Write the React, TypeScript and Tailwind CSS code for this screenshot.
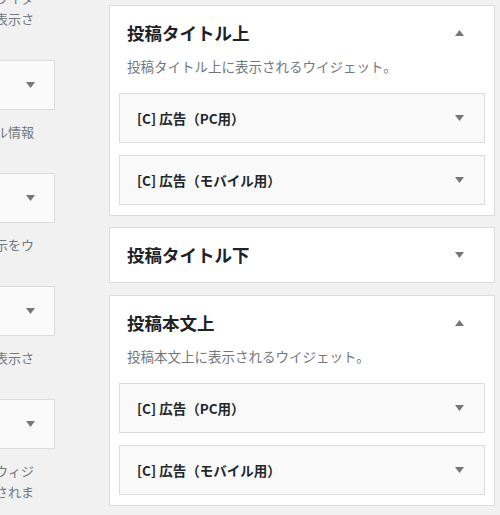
import React from 'react';

const font = { fontFamily: '"Noto Sans CJK JP", "Noto Sans", sans-serif' };

const Arrow = ({ up = false }: { up?: boolean }) => (
  <svg width="9" height="6" viewBox="0 0 9 6" className="shrink-0">
    <polygon points={up ? '0,6 9,6 4.5,0' : '0,0 9,0 4.5,6'} fill="#72777c" />
  </svg>
);

interface LeftWidgetProps {
  lines: string[];
  box?: boolean;
}

const LeftWidget: React.FC<LeftWidgetProps> = ({ lines, box = true }) => (
  <div className="mb-[10px]">
    {box && (
      <div className="h-[50px] border border-[#dcdcde] bg-[#fafafa] flex items-center justify-end pr-[19px] mb-[11px]">
        <Arrow />
      </div>
    )}
    <div className="pr-[21px] text-right text-[13px] leading-[21px] text-[#72777c]">
      {lines.map((l, i) => (
        <div key={i} className="h-[21px] whitespace-nowrap">
          {l}
        </div>
      ))}
    </div>
  </div>
);

const WidgetItem = ({ name }: { name: string }) => (
  <div className="h-[50px] border border-[#dcdcde] bg-[#f9f9f9] flex items-center justify-between pl-[17px] pr-[20px]">
    <span className="text-[13.5px] font-semibold text-[#23282d]">{name}</span>
    <Arrow />
  </div>
);

interface SidebarPanelProps {
  title: string;
  description?: string;
  open?: boolean;
}

const SidebarPanel: React.FC<SidebarPanelProps> = ({ title, description, open = false }) => (
  <div className="border border-[#dcdcde] bg-white">
    <div className="h-[54px] flex items-center justify-between pl-[17px] pr-[30px]">
      <h3 className="text-[17.5px] font-bold text-[#1d2327]">{title}</h3>
      <Arrow up={open} />
    </div>
    {open && (
      <div className="px-[9px] pb-[10px]">
        <p className="-mt-[4px] h-[20px] leading-[20px] pl-[8px] text-[13.5px] text-[#72777c]">
          {description}
        </p>
        <div className="mt-[17px] flex flex-col gap-[12px]">
          <WidgetItem name="[C] 広告（PC用）" />
          <WidgetItem name="[C] 広告（モバイル用）" />
        </div>
      </div>
    )}
  </div>
);

export default function App() {
  return (
    <div className="w-[500px] h-[515px] overflow-hidden bg-[#f1f1f1] flex items-start" style={font}>
      <div className="w-[200px] -ml-[145px] -mt-[13px] shrink-0">
        <LeftWidget box={false} lines={['記事一覧を表示するウイダ', 'サイドバーに表示さ', '']} />
        <LeftWidget lines={['プロフィール情報', '']} />
        <LeftWidget lines={['ボタン表示をウ', '']} />
        <LeftWidget lines={['人気記事を表示さ', '']} />
        <LeftWidget lines={['新着記事のウィジ', 'に表示されま']} />
      </div>
      <div className="ml-[54px] mt-[5px] w-[386px] shrink-0 flex flex-col">
        <div className="mb-[11px]">
          <SidebarPanel title="投稿タイトル上" description="投稿タイトル上に表示されるウイジェット。" open />
        </div>
        <div className="mb-[12px]">
          <SidebarPanel title="投稿タイトル下" />
        </div>
        <SidebarPanel title="投稿本文上" description="投稿本文上に表示されるウイジェット。" open />
      </div>
    </div>
  );
}
